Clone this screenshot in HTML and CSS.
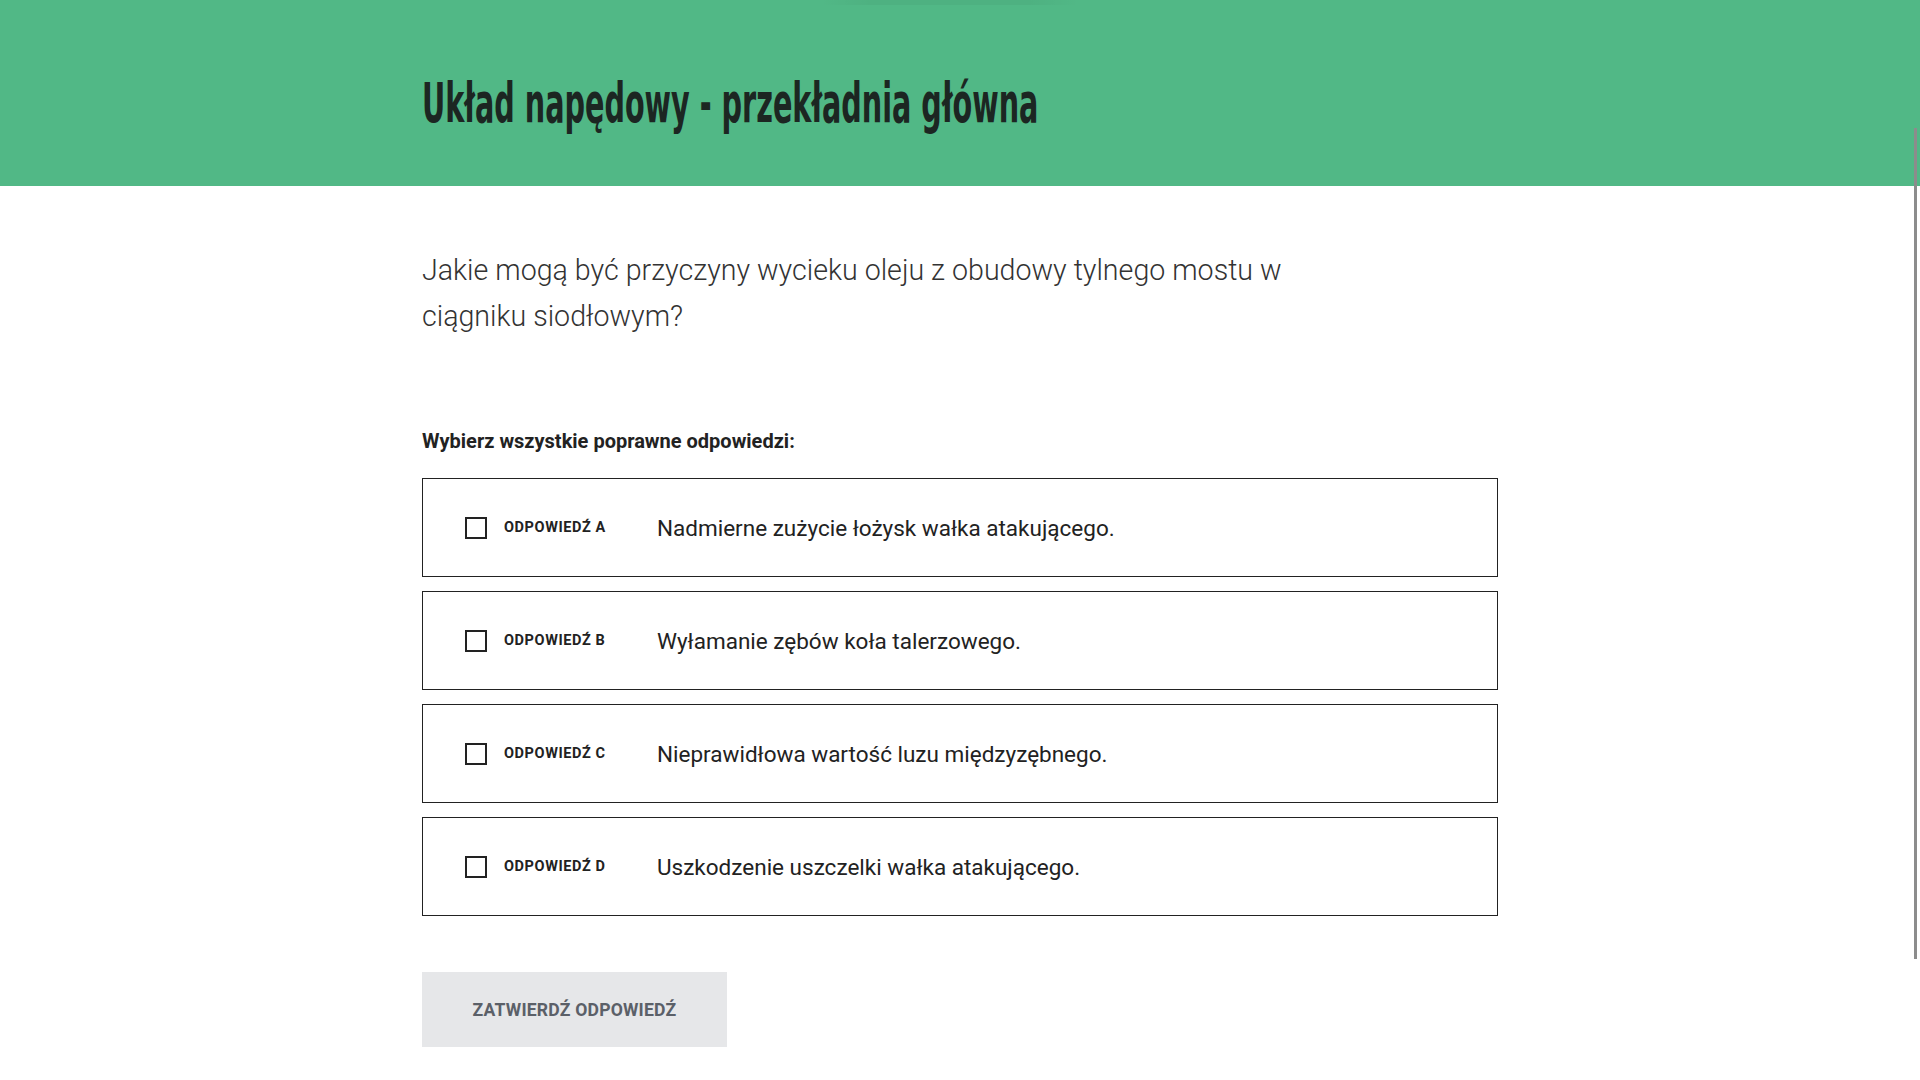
FILE: index.html
```html
<!DOCTYPE html>
<html lang="pl">
<head>
<meta charset="utf-8">
<title>Układ napędowy - przekładnia główna</title>
<link rel="stylesheet" href="styles.css">
</head>
<body>
<header class="hero">
  <div class="hero-glow"></div>
  <div class="wrap">
    <h1 class="title">Układ napędowy - przekładnia główna</h1>
  </div>
</header>
<main class="wrap content">
  <p class="question">Jakie mogą być przyczyny wycieku oleju z obudowy tylnego mostu w ciągniku siodłowym?</p>
  <p class="instruction">Wybierz wszystkie poprawne odpowiedzi:</p>
  <div class="options">
    <label class="option"><span class="box"></span><span class="tag">ODPOWIEDŹ A</span><span class="answer">Nadmierne zużycie łożysk wałka atakującego.</span></label>
    <label class="option"><span class="box"></span><span class="tag">ODPOWIEDŹ B</span><span class="answer">Wyłamanie zębów koła talerzowego.</span></label>
    <label class="option"><span class="box"></span><span class="tag">ODPOWIEDŹ C</span><span class="answer">Nieprawidłowa wartość luzu międzyzębnego.</span></label>
    <label class="option"><span class="box"></span><span class="tag">ODPOWIEDŹ D</span><span class="answer">Uszkodzenie uszczelki wałka atakującego.</span></label>
  </div>
  <button class="submit" type="button">ZATWIERDŹ ODPOWIEDŹ</button>
</main>
<div class="scroll-indicator"></div>
</body>
</html>
```

FILE: styles.css
```css
html, body {
  margin: 0;
  padding: 0;
  background: #ffffff;
  overflow: hidden;
}

body {
  font-family: Roboto, "Liberation Sans", Arial, sans-serif;
  color: #222222;
}

.wrap {
  width: 1076px;
  margin: 0 auto;
}

.hero {
  position: relative;
  height: 186px;
  background: #51b886;
  box-sizing: border-box;
  padding-top: 76px;
}

.hero-glow {
  position: absolute;
  top: 0;
  left: calc(50% - 140px);
  width: 260px;
  height: 5px;
  background: linear-gradient(90deg, rgba(0,0,0,0) 0%, rgba(0,0,0,0.04) 20%, rgba(0,0,0,0.04) 80%, rgba(0,0,0,0) 100%);
}

.title {
  margin: 0;
  font-family: "DejaVu Sans Condensed", "DejaVu Sans", sans-serif;
  font-weight: 700;
  font-size: 55px;
  line-height: 54px;
  color: #1c2622;
  white-space: nowrap;
  transform: scaleX(0.579);
  transform-origin: left center;
}

.content {
  padding-top: 61px;
}

.question {
  margin: 0;
  max-width: 900px;
  font-weight: 300;
  font-size: 28.6px;
  line-height: 46px;
  color: #333333;
}

.instruction {
  margin: 90px 0 0;
  font-weight: 700;
  font-size: 20px;
  line-height: 24px;
  color: #222222;
}

.options {
  margin-top: 25px;
  display: flex;
  flex-direction: column;
  gap: 14px;
}

.option {
  display: flex;
  align-items: center;
  height: 99px;
  box-sizing: border-box;
  border: 1px solid #222222;
  padding-left: 42px;
  cursor: pointer;
}

.box {
  flex: 0 0 auto;
  width: 22px;
  height: 22px;
  box-sizing: border-box;
  border: 2px solid #222222;
  margin-right: 17px;
}

.tag {
  flex: 0 0 153px;
  font-weight: 700;
  font-size: 14.5px;
  letter-spacing: 0.6px;
  color: #222222;
}

.answer {
  font-weight: 400;
  font-size: 22.5px;
  color: #222222;
}

.submit {
  display: block;
  margin-top: 56px;
  width: 305px;
  height: 75px;
  border: none;
  background: #e6e7e9;
  font-family: Roboto, "Liberation Sans", Arial, sans-serif;
  font-weight: 700;
  font-size: 17.6px;
  letter-spacing: 0.2px;
  color: #5b6068;
  cursor: pointer;
}

.scroll-indicator {
  position: fixed;
  right: 3px;
  top: 128px;
  width: 3px;
  height: 831px;
  background: #8c8c8c;
}
```
